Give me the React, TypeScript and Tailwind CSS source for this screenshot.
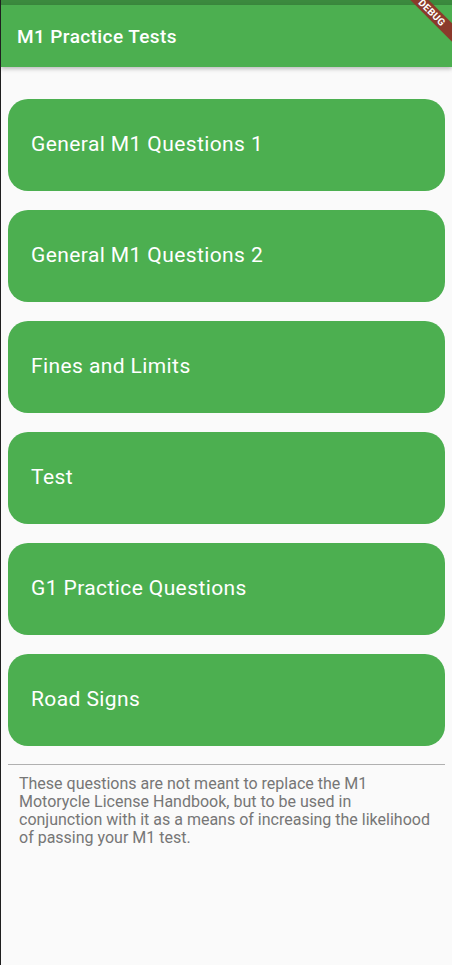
import React from 'react';

const items = [
  'General M1 Questions 1',
  'General M1 Questions 2',
  'Fines and Limits',
  'Test',
  'G1 Practice Questions',
  'Road Signs',
];

export default function App() {
  return (
    <div className="relative min-h-[965px] w-[452px] overflow-hidden bg-[#fafafa] font-['Roboto',sans-serif] border-l border-[#1f1f1f]">
      {/* status bar */}
      <div className="h-[5px] bg-[#3b8a3e]" />

      {/* app bar */}
      <header className="flex h-[62px] items-center bg-[#4caf50] px-4 pt-[2px] shadow-[0_2px_4px_rgba(0,0,0,0.25)]">
        <h1 className="text-[19px] font-medium tracking-[0.4px] text-white">M1 Practice Tests</h1>
      </header>

      {/* debug banner */}
      <div className="pointer-events-none absolute right-0 top-0 h-[60px] w-[60px] overflow-hidden">
        <div className="absolute right-[-40px] top-[6px] w-[120px] rotate-45 bg-[#8b3a2b] text-center text-[10px] font-bold leading-[13px] tracking-wide text-white">
          DEBUG
        </div>
      </div>

      <main className="flex flex-col gap-[19px] px-[7px] pt-[32px]">
        {items.map((t) => (
          <button
            key={t}
            className="flex h-[92px] items-center rounded-[20px] bg-[#4caf50] px-[23px] text-left text-[21px] tracking-[0.4px] text-white"
          >
            {t}
          </button>
        ))}
      </main>

      <div className="mx-[7px] mt-[18px] border-t border-[#b0b0b0]" />
      <p className="pl-[18px] pr-[18px] pt-[10px] text-[16px] leading-[18px] text-[#767676]">
        These questions are not meant to replace the M1 Motorycle License Handbook, but to be used in conjunction with it as a means of increasing the likelihood of passing your M1 test.
      </p>
    </div>
  );
}
